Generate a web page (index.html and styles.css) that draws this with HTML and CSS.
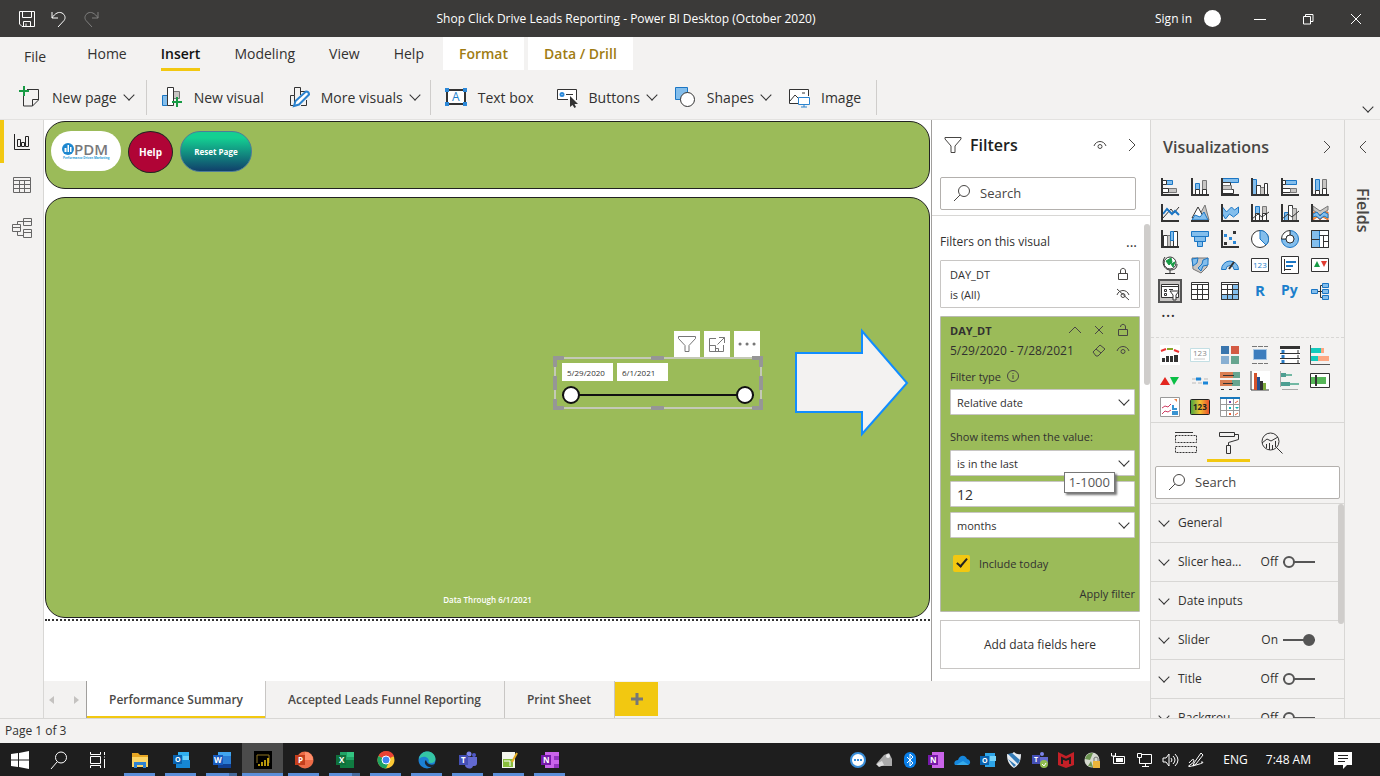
FILE: index.html
```html
<!DOCTYPE html>
<html lang="en">
  <head>
    <meta charset="UTF-8" />
    <meta name="viewport" content="width=device-width, initial-scale=1.0" />
    <title>Shop Click Drive Leads Reporting - Power BI Desktop</title>
    <link rel="stylesheet" href="styles.css">
  </head>
  <body>
    <header class="titlebar">
      <div class="quick">
        <button aria-label="Save"><svg width="18" height="18" viewBox="0 0 18 18"><path d="M1.500 1.500h15v15H4l-2.500-2.500zM4.500 1.500v6h9v-6M5.500 16.500v-5h7v5M8 16.500v-3" /></svg></button>
        <button aria-label="Undo"><svg width="18" height="18" viewBox="0 0 18 18"><path d="M2 2v6h6M2 8c3-5 7-6.500 10-5s4 5 2 7.500L8 17" /></svg></button>
        <button aria-label="Redo" class="dim"><svg width="18" height="18" viewBox="0 0 18 18"><path d="M16 2v6h-6M16 8c-3-5-7-6.500-10-5s-4 5-2 7.500L10 17" /></svg></button>
      </div>
      <h1>Shop Click Drive Leads Reporting - Power BI Desktop (October 2020)</h1>
      <div class="window-controls">
        <a href="#" class="sign-in">Sign in <span class="avatar"></span></a>
        <button aria-label="Minimize"><svg width="12" height="12" viewBox="0 0 12 12"><path d="M0 6.500h12" /></svg></button>
        <button aria-label="Restore"><svg width="12" height="12" viewBox="0 0 12 12"><path d="M1.500 3.500h7V11h-7zM3.500 3.500v-2h7.500v7H8.500" /></svg></button>
        <button aria-label="Close"><svg width="12" height="12" viewBox="0 0 12 12"><path d="M1 1l10 10M11 1L1 11" /></svg></button>
      </div>
    </header>

    <nav class="ribbon-tabs">
      <a href="#" class="file">File</a>
      <a href="#">Home</a>
      <a href="#" class="active"><span>Insert</span></a>
      <a href="#">Modeling</a>
      <a href="#">View</a>
      <a href="#">Help</a>
      <a href="#" class="context">Format</a>
      <a href="#" class="context">Data / Drill</a>
    </nav>

    <div class="ribbon">
      <div class="group">
        <button><svg width="22" height="22" viewBox="0 0 22 22"><path class="k" d="M8 3.500h11.500V14l-6 6H4.500V9M19.500 13.500h-6V20" /><path class="green" d="M5 0v10M0 5h10" /></svg>New page<i class="chev"></i></button>
      </div>
      <div class="group">
        <button><svg width="22" height="22" viewBox="0 0 22 22"><path class="g" d="M12.500 5.500h6v7h-6z" /><path class="b" d="M1.500 9.500h5v10h-5z" /><path class="w" d="M6.500 1.500h6v18h-6z" /><path class="green" d="M16 11v10M11 16h10" /></svg>New visual</button>
        <button><svg width="22" height="22" viewBox="0 0 22 22"><path class="k" d="M6 19.500H2.500v-10h4v10M6.500 9.500v-8h6V9M13 5.500h5M13 19.500h5.500V14" /><path class="pencil" d="M6 20l1.500-5L18 5.500q3 0 3 3L11 18.500z" /></svg>More visuals<i class="chev"></i></button>
      </div>
      <div class="group">
        <button><svg width="22" height="22" viewBox="0 0 22 22"><path class="w" d="M2 4h18v14H2z" stroke-width="2" /><path class="dots" d="M0 2h4v4H0zM18 2h4v4h-4zM0 16h4v4H0zM18 16h4v4h-4z" /><text class="blue" x="7" y="15" font-size="12">A</text></svg>Text box</button>
        <button><svg width="22" height="22" viewBox="0 0 22 22"><path class="w" d="M12 13.500H1.500v-10h19V14" /><circle class="ring" cx="6" cy="8.500" r="1.500" /><path class="k" d="M10 8.500h7" /><path class="solid" d="M14 10v11l2.500-2 2 3 1.500-1-1.500-3H22z" /></svg>Buttons<i class="chev"></i></button>
        <button><svg width="22" height="22" viewBox="0 0 22 22"><path class="b" d="M1.500 1.500h12v12h-12z" /><circle class="w" cx="13.500" cy="13.500" r="7" /></svg>Shapes<i class="chev"></i></button>
        <button><svg width="22" height="22" viewBox="0 0 22 22"><path class="w" d="M10 17.500H1.500v-14h19V10" /><path class="k" d="M2 15l5-6 4 4M14 7h3" /><path class="screen" d="M10.500 11.500h11v7h-11zM16 18v3M13 21h6" /></svg>Image</button>
      </div>
      <i class="chev collapse"></i>
    </div>

    <main class="workspace">
      <nav class="rail">
        <button class="active" aria-label="Report view"><svg width="18" height="18" viewBox="0 0 18 18"><path d="M1.500 1v15.500H17M4.500 6.500h3v7h-3zM8.500 9.500h3v4h-3zM12.500 3.500h3v10h-3z" /></svg></button>
        <button aria-label="Data view"><svg width="18" height="18" viewBox="0 0 18 18"><path d="M.5 1.500h17v15H.5zM.5 4.500h17M.5 8.500h17M.5 12.500h17M6.500 4v12M11.500 4v12" /></svg></button>
        <button aria-label="Model view"><svg width="20" height="20" viewBox="0 0 20 20"><path d="M.5 6.500h8v7h-8zM.5 9.500h8M11.500.5h8v7h-8zM11.500 3.500h8M11.500 11.500h8v8h-8zM11.500 14.500h8M5.500 6V3.500h6M5.500 14v3.500h6" /></svg></button>
      </nav>

      <section class="work">
        <div class="panes">
          <div class="canvas">
            <div class="report">
              <div class="report-header">
                <div class="pdm">
                  <svg width="52" height="20" viewBox="0 0 52 20"><circle cx="8" cy="8" r="6" fill="#1d87cf" /><path d="M4.500 11V7h2v4M7.500 11V4H9v7M10 11V6h1.500v5" fill="#fff" /><text class="brand" x="14" y="14" font-size="15">PDM</text><text class="tagline" x="3" y="18" font-size="3">Performance Driven Marketing</text></svg>
                </div>
                <button class="help">Help</button>
                <button class="reset">Reset Page</button>
              </div>
              <div class="report-body">
                <div class="slicer-tools">
                  <button aria-label="Filters"><svg width="20" height="20" viewBox="0 0 20 20"><path d="M1.500 2.500h17v2L12 11.500v6H8v-6L1.500 4.500z" /></svg></button>
                  <button aria-label="Focus mode"><svg width="20" height="20" viewBox="0 0 20 20"><path d="M9 4.500H2.500v13h14V11M2.500 11.500h6v6M8.500 14.500h3v3M10.500 10.500l7-7M12 3.500h5.500V9" /></svg></button>
                  <button aria-label="More options"><svg width="20" height="20" viewBox="0 0 20 20"><path class="more" d="M3 10h.1M10 10h.1M17 10h.1" /></svg></button>
                </div>
                <div class="slicer">
                  <svg class="handles" width="210" height="54" viewBox="0 0 210 54"><path class="frame" d="M2 2h206v50H2z" /><path class="grip" d="M2 11V2h9M98 2h13M199 2h9v9M208 20v14M208 43v9h-9M111 52H98M11 52H2v-9M2 34V20" /></svg>
                  <div class="dates">
                    <input type="text" value="5/29/2020" aria-label="Start date" />
                    <input type="text" value="6/1/2021" aria-label="End date" />
                  </div>
                  <div class="range">
                    <input type="range" value="0" aria-label="From" />
                    <input type="range" value="100" aria-label="To" />
                  </div>
                </div>
                <svg class="arrow" width="116" height="110" viewBox="0 0 116 110"><path d="M2 25h66V3l45 52-45 51V84H2z" /></svg>
                <p class="through">Data Through 6/1/2021</p>
              </div>
            </div>
          </div>

          <aside class="filters">
            <div class="filters-top">
              <div class="pane-head">
                <svg width="18" height="18" viewBox="0 0 18 18"><path d="M1 1.500h16v1.500L11 10v6.500H7V10L1 3z" /></svg>
                <h2>Filters</h2>
                <button aria-label="Show or hide"><svg width="14" height="14" viewBox="0 0 14 14"><path d="M1 8c2-6 10-6 12 0" /><circle cx="7" cy="8.500" r="2" /></svg></button>
                <button aria-label="Collapse"><svg width="10" height="14" viewBox="0 0 10 14"><path d="M2 1l6 6-6 6" /></svg></button>
              </div>
              <label class="search"><svg width="18" height="18" viewBox="0 0 18 18"><circle cx="11" cy="7" r="5.500" /><path d="M7 11l-6 6" /></svg><input type="text" placeholder="Search" aria-label="Search filters" /></label>
            </div>
            <div class="filters-list">
              <div class="section-title">Filters on this visual <span>...</span></div>
              <div class="card">
                <div class="row">DAY_DT <svg width="14" height="14" viewBox="0 0 14 14"><path d="M2.500 6.500h9v6h-9zM4.500 6V4c0-3.500 5-3.500 5 0v2" /></svg></div>
                <div class="row">is (All) <svg width="14" height="14" viewBox="0 0 14 14"><path d="M1 8c2-6 10-6 12 0M1 2l12 11" /><circle cx="7" cy="8.500" r="2" /></svg></div>
              </div>
              <div class="card open">
                <div class="row"><b>DAY_DT</b>
                  <span class="icons">
                    <svg width="14" height="14" viewBox="0 0 14 14"><path d="M1 10l6-6 6 6" /></svg>
                    <svg width="14" height="14" viewBox="0 0 14 14"><path d="M3 3l8 8M11 3l-8 8" /></svg>
                    <svg width="14" height="14" viewBox="0 0 14 14"><path d="M2.500 6.500h9v6h-9zM4.500 4c0-3.500 5-3.500 5 0v2" /></svg>
                  </span>
                </div>
                <div class="row period">5/29/2020 - 7/28/2021
                  <span class="icons">
                    <svg width="14" height="14" viewBox="0 0 14 14"><path d="M1 9l7-7 5 4-7 7H4zM4 6l5 4" /></svg>
                    <svg width="14" height="14" viewBox="0 0 14 14"><path d="M1 8c2-6 10-6 12 0" /><circle cx="7" cy="8.500" r="2" /></svg>
                  </span>
                </div>
                <label class="field-label" for="filter-type">Filter type <svg width="14" height="14" viewBox="0 0 14 14"><circle cx="7" cy="7" r="5.500" /><path d="M7 6v4M7 4v1" /></svg></label>
                <div class="select"><select id="filter-type"><option>Relative date</option></select></div>
                <label class="field-label second" for="when">Show items when the value:</label>
                <div class="select"><select id="when"><option>is in the last</option></select></div>
                <div class="amount"><input type="text" value="12" aria-label="Amount" /><span class="tooltip">1-1000</span></div>
                <div class="select"><select aria-label="Unit"><option>months</option></select></div>
                <label class="include"><input type="checkbox" checked /> Include today</label>
                <button class="apply">Apply filter</button>
              </div>
              <div class="drop">Add data fields here</div>
              <i class="thumb"></i>
            </div>
          </aside>
        </div>

        <nav class="pages">
          <div class="arrows"><i></i><i class="next"></i></div>
          <a href="#" class="active">Performance Summary</a>
          <a href="#">Accepted Leads Funnel Reporting</a>
          <a href="#">Print Sheet</a>
          <button class="add" aria-label="New page"><svg width="12" height="12" viewBox="0 0 12 12"><path d="M6 0v12M0 6h12" /></svg></button>
        </nav>
      </section>

      <aside class="visuals">
        <div class="pane-head">
          <h2>Visualizations</h2>
          <button aria-label="Collapse"><svg width="10" height="14" viewBox="0 0 10 14"><path d="M2 1l6 6-6 6" /></svg></button>
        </div>
        <div class="gallery">
          <svg viewBox="0 0 18 18"><path class="b" d="M5.500 2.500h6v4h-6z" /><path class="w" d="M1.500 2.500h4v4h-4z" /><path class="g" d="M7.500 10.500h8v4h-8z" /><path class="w" d="M1.500 10.500h6v4h-6z" /><path class="axis" d="M1 0v17h17" /></svg>
          <svg viewBox="0 0 18 18"><path class="b" d="M4.500 5.500h4v6h-4z" /><path class="w" d="M4.500 11.500h4v5h-4z" /><path class="g" d="M11.500 2.500h4v9h-4z" /><path class="w" d="M11.500 11.500h4v5h-4z" /><path class="axis" d="M1 0v17h17" /></svg>
          <svg viewBox="0 0 18 18"><path class="b" d="M1.500.5h16v4h-16z" /><path class="w" d="M1.500 4.500h8v3h-8zM1.500 11.500h11v4h-11z" /><path class="g" d="M1.500 7.500h9v4h-9z" /><path class="axis" d="M1 0v17h17" /></svg>
          <svg viewBox="0 0 18 18"><path class="b" d="M1.500 1.500h4v15h-4z" /><path class="w" d="M5.500 7.500h4v9h-4z" /><path class="g" d="M9.500 9.500h4v7h-4z" /><path class="w" d="M13.500 5.500h3v11h-3z" /><path class="axis" d="M1 0v17h17" /></svg>
          <svg viewBox="0 0 18 18"><path class="b" d="M4.500 2.500h11v4h-11z" /><path class="w" d="M1.500 2.500h3v4h-3zM1.500 10.500h8v4h-8z" /><path class="g" d="M9.500 10.500h6v4h-6z" /><path class="axis" d="M1 0v17h17" /></svg>
          <svg viewBox="0 0 18 18"><path class="b" d="M4.500 1.500h4v11h-4z" /><path class="g" d="M11.500 1.500h4v9h-4z" /><path class="w" d="M4.500 12.500h4v4h-4zM11.500 10.500h4v6h-4z" /><path class="axis" d="M1 0v17h17" /></svg>

          <svg viewBox="0 0 18 18"><path class="k" d="M2 14l8-9 3 4 5-6" /><path class="bl" d="M2 10l4-5 5 5 3-3 4 4" /><path class="axis" d="M1 0v17h17" /></svg>
          <svg viewBox="0 0 18 18"><path class="g" d="M9 10l5-9 4 15z" /><path class="w" d="M1 14l6-11 6 11z" /><path class="b" d="M1 16l3-5 5 2 4-5 4 8z" /><path class="axis" d="M0 17h18" /></svg>
          <svg viewBox="0 0 18 18"><path class="b" d="M1.500 3l4 5 5-5 3 3 4-3v6l-5 4-4-3-4 5-3-5z" /><path class="axis" d="M1 0v17h17" /></svg>
          <svg viewBox="0 0 18 18"><path class="b" d="M4.500 2.500h4v14h-4z" /><path class="g" d="M11.500 2.500h4v14h-4z" /><path class="w" d="M4.500 9.500h4v7h-4zM11.500 9.500h4v7h-4z" /><path class="k" d="M1 15l6-5 4 3 7-5" /><path class="axis" d="M1 0v17h17" /></svg>
          <svg viewBox="0 0 18 18"><path class="b" d="M3.500 8.500h4v8h-4z" /><path class="w" d="M7.500 1.500h4v15h-4z" /><path class="g" d="M11.500 4.500h4v12h-4z" /><path class="k" d="M1 15l6-5 4 3 7-6" /><path class="axis" d="M1 0v17h17" /></svg>
          <svg viewBox="0 0 18 18"><path d="M2 8h15v8l-5-3-3 3-3-3-4 3z" fill="#f3a33b" stroke="#e8682c" /><path class="g" d="M2 2l7 5 8-5v4l-8 5-7-5z" /><path class="b" d="M2 10l4-2 3 4 4-4 4 2v4l-4-2-4 3-4-3-3 1z" /><path class="axis" d="M1 0v17h17" /></svg>

          <svg viewBox="0 0 18 18"><path class="w" d="M2.500 5.500h4v11h-4zM12.500 1.500h4v15h-4z" /><path class="g" d="M6.500 5.500h3v11h-3z" /><path class="b" d="M9.500 1.500h3v9h-3z" /><path class="axis" d="M1 0v17h17" /></svg>
          <svg viewBox="0 0 18 18"><path class="b" d="M.5 1.500h17v5H.5zM3.500 6.500h11v5h-11zM6.500 11.500h5v5h-5z" /></svg>
          <svg viewBox="0 0 18 18"><path class="dots" d="M3 4h3v3H3zM8 7h3v3H8zM12 11h3v3h-3z" /><path class="solid" d="M12 1h3v3h-3zM3 12h3v3H3z" /><path class="axis" d="M1 0v17h17" /></svg>
          <svg viewBox="0 0 18 18"><circle class="w" cx="9" cy="9" r="8.500" /><path class="b" d="M9 9V.5a8.500 8.500 0 0 1 6 14.500z" /></svg>
          <svg viewBox="0 0 18 18"><path class="b" d="M9 .5A8.500 8.500 0 1 1 .5 9H5a4 4 0 1 0 4-4z" /><path class="w" d="M.5 9A8.500 8.500 0 0 1 9 .5V5a4 4 0 0 0-4 4z" /><circle class="w" cx="9" cy="9" r="4" /></svg>
          <svg viewBox="0 0 18 18"><path class="w" d="M.5.5h17v17H.5z" /><path class="b" d="M.5.5h8v17h-8z" /><path class="k" d="M.5 9.500h8M8.500 5.500h9M12.500 5.500v12M12.500 11.500h5M.5.5h17v17H.5z" /></svg>

          <svg viewBox="0 0 18 18"><circle class="w" cx="9" cy="7" r="6" /><path d="M5 5l5-3 1 4-3 3zM10 8l4-2-2 5z" fill="#169b45" stroke="#169b45" /><path class="k" d="M4 1C0 6 3 14 9 14s7-3 7-6M9 14v3M4 17.500h10" /></svg>
          <svg viewBox="0 0 18 18"><path class="g" d="M1 2h16l-1 9-6 6-8-4z" /><path class="b" d="M1 3l6-1-1 5-4 3zM12 4l5-2v7l-5 1-2 5-3-3 4-4z" /></svg>
          <svg viewBox="0 0 18 18"><path class="b" d="M.5 13.500a8.500 8.500 0 0 1 17 0H13a4 4 0 0 0-8 0z" /><path class="axis" d="M8 13l5-7" /></svg>
          <svg viewBox="0 0 18 18"><path class="w" d="M.5 2.500h17v13H.5z" /><text class="blue" x="2" y="12" font-size="8">123</text></svg>
          <svg viewBox="0 0 18 18"><path class="w" d="M.5.5h17v17H.5z" /><path class="k" d="M3.500 3v12M4 13.500h6" /><path class="thick" d="M5 6h10M5 10h7" /></svg>
          <svg viewBox="0 0 18 18"><path class="w" d="M.5 2.500h17v13H.5z" /><path d="M3 11l3-6 3 6z" fill="#169b45" stroke="none" /><path d="M10 5h6l-3 6z" fill="#e03a2f" stroke="none" /></svg>

          <svg class="selected" viewBox="0 0 18 18"><path class="w" d="M.5 2.500h17v13H.5z" /><path class="k" d="M.5 4.500h17M3.500 7.500h2v2h-2zM3.500 11.500h2v2h-2zM8 7.500h4" /><path class="w" d="M9 9h9l-3 4v5h-3v-5z" /></svg>
          <svg viewBox="0 0 18 18"><path class="w" d="M.5.5h17v17H.5z" /><path class="k" d="M.5 2.500h17M.5 7.500h17M.5 12.500h17M6.500 2v15M11.500 2v15" /></svg>
          <svg viewBox="0 0 18 18"><path class="w" d="M.5.5h17v17H.5z" /><path class="b" d="M11.500 2.500h6v15H.5v-5h11z" /><path class="k" d="M.5 2.500h17M.5 7.500h17M.5 12.500h17M6.500 2v15M11.500 2v15M.5.5h17v17H.5z" /></svg>
          <svg viewBox="0 0 18 18"><text class="blue bold" x="4" y="14" font-size="15">R</text></svg>
          <svg viewBox="0 0 18 18"><text class="blue bold" x="0" y="13" font-size="14">Py</text></svg>
          <svg viewBox="0 0 18 18"><path class="k" d="M6 9.500h6M9.500 9V3.500H12M9.500 9v6.500H12" /><path class="b" d="M.5 7.500h6v4h-6zM11.500 1.500h6v4h-6zM11.500 7.500h6v4h-6zM11.500 13.500h6v4h-6z" /></svg>
        </div>
        <div class="more-visuals">...</div>
        <div class="gallery custom">
          <svg viewBox="0 0 20 20"><path d="M0 0h20v20H0z" fill="#fff" /><path d="M1 6l5-2" stroke="#e33" stroke-width="2" /><path d="M7 4h6" stroke="#8aa62a" stroke-width="2" /><path d="M14 5l5 2" stroke="#e33" stroke-width="2" /><path class="solid" d="M2 13h3v4H2zM6 11h3v6H6zM10 11h3v6h-3zM14 10h4v7h-4z" /></svg>
          <svg viewBox="0 0 20 20"><path d="M.5 3.500h19v13H.5z" fill="#fff" stroke="#c3dfe4" /><text class="muted" x="3" y="11" font-size="8">123</text><path d="M4 14h11" stroke="#ccc" /></svg>
          <svg viewBox="0 0 20 20"><path d="M1 1h8v8H1z" fill="#3a76ae" /><path d="M11 1h8v8h-8z" fill="#d45a43" /><path d="M1 11h8v8H1z" fill="#88afd2" /><path d="M11 11h8v8h-8z" fill="#67a58f" /></svg>
          <svg viewBox="0 0 20 20"><path d="M2 1.500h16M2 18.500h16" stroke="#777" stroke-dasharray="5 1" /><path d="M3 4h14v11H3z" fill="#a9c8e4" /><path d="M4 5h12v9H4z" fill="#3d7dbd" /></svg>
          <svg viewBox="0 0 20 20"><path d="M0 1h20v18H0z" fill="#fff" /><path class="solid" d="M0 1h20v3H0z" /><path class="k" d="M0 8.500h20M0 13.500h20M0 18.500h20" /><path d="M3 5v14" stroke="#2b7cc4" stroke-width="3" stroke-dasharray="3 2" /><path d="M18 5v14" stroke="#999" stroke-width="2" stroke-dasharray="3 2" /></svg>
          <svg viewBox="0 0 20 20"><path d="M.5 0v19.500H20" fill="none" stroke="#555" /><path d="M1 3h10v5H1zM1 11h7v5H1z" fill="#15cabd" /><path d="M11 3h3v5h-3zM8 11h11v5H8z" fill="#fda782" /></svg>

          <svg viewBox="0 0 20 20"><path d="M0 14l5-8 5 8z" fill="#e3261f" /><path d="M10 6h9l-5 8z" fill="#0abf45" /></svg>
          <svg viewBox="0 0 20 20"><path d="M2 8h16M2 12h16" stroke="#bbb" stroke-dasharray="4 2" /><path d="M6 8h5M13 12h5" stroke="#1b86d8" stroke-width="3" /></svg>
          <svg viewBox="0 0 20 20"><path d="M0 1h20v6H0zM0 9h20v6H0z" fill="#d97e52" /><path d="M13 1h7v6h-7zM12 9h8v6h-8z" fill="#67a58f" /><path class="k" d="M3 4.500h11M3 12.500h10M1 18.500h3M9 18.500h3M17 18.500h3" /></svg>
          <svg viewBox="0 0 20 20"><path d="M0 0h20v20H0z" fill="#fff" /><path class="k" d="M1 0v19h18" /><path d="M4 2h3v17H4z" fill="#d4532d" /><path d="M7 6h3v13H7z" fill="#24508f" /><path d="M10 10h3v9h-3z" fill="#333" /><path d="M13 12h3v7h-3z" fill="#7caa3c" /></svg>
          <svg viewBox="0 0 20 20"><path d="M.5 0v16M2 18.500h16" stroke="#aaa" /><path d="M1 4h11M1 13h18" stroke="#72b8a3" stroke-width="2" /><path d="M1 4h5M1 13h9" stroke="#4d9e92" stroke-width="4" /></svg>
          <svg viewBox="0 0 20 20"><path class="w" d="M.5 2.500h19v14H.5z" /><path d="M1 6h15v7H1z" fill="#56b658" /><path class="solid" d="M5 4h2v11H5z" /></svg>

          <svg viewBox="0 0 20 20"><path d="M.5.5h19v19H.5z" fill="#fff" stroke="#999" /><path d="M2 11l3-2 3 1 3-3M2 17l3-3 3 1 3-2" fill="none" stroke="#cf3b62" /><path d="M12 8h2v3h3v2h-5zM12 14h6v4h-6z" fill="#3994d2" /><path d="M14 2h3v3z" fill="#ef8044" /></svg>
          <svg viewBox="0 0 20 20"><defs><linearGradient id="heat"><stop stop-color="#43a641" /><stop offset=".5" stop-color="#f2c230" /><stop offset="1" stop-color="#ea4b2c" /></linearGradient></defs><rect x=".5" y="2.500" width="19" height="15" rx="1" fill="url(#heat)" stroke="#222" /><text class="ink" x="3" y="13" font-size="8">123</text></svg>
          <svg viewBox="0 0 20 20"><path d="M0 0h20v20H0z" fill="#fff" /><path d="M0 1h20" stroke="#1777bd" stroke-width="2" /><path d="M.5 2v17.500h19V2M6.500 2v17M13.500 2v17M0 7.500h20M0 13.500h20" fill="none" stroke="#999" /><path d="M9 4h2v2H9z" fill="#7143ac" /><path d="M9 10h2v2H9zM15 10l2 2 2-2" fill="#11b6b6" /><path d="M9 16h2v2H9z" fill="#e9613b" /><path d="M15 6l3-2M15 18l3-2" stroke="#e9613b" /></svg>
        </div>
        <div class="format-tabs">
          <button aria-label="Fields"><svg width="22" height="22" viewBox="0 0 22 22"><path d="M0 .5h18" /><path stroke-dasharray="2 1" d="M.5 3.500h21v7H.5zM.5 14.500h21v6H.5z" /></svg></button>
          <button class="active" aria-label="Format"><svg width="22" height="22" viewBox="0 0 22 22"><path d="M1.500.5h15v4h-15zM16.500 2.500h4v5l-10 3v3M8.500 13.500h4v8h-4z" /></svg></button>
          <button aria-label="Analytics"><svg width="22" height="22" viewBox="0 0 22 22"><circle cx="9.500" cy="9.500" r="8.500" /><path d="M15 15l6.500 6.500M1 11l5-4 4 2 7-4M5.500 16v-4M8.500 18v-7M11.500 18v-5M14.500 15v-6" /></svg></button>
        </div>
        <label class="search"><svg width="18" height="18" viewBox="0 0 18 18"><circle cx="11" cy="7" r="5.500" /><path d="M7 11l-6 6" /></svg><input type="text" placeholder="Search" aria-label="Search format options" /></label>
        <div class="options">
          <div class="option"><i class="chev"></i><span>General</span></div>
          <div class="option"><i class="chev"></i><span>Slicer hea...</span><label>Off <input type="checkbox" /></label></div>
          <div class="option"><i class="chev"></i><span>Date inputs</span></div>
          <div class="option"><i class="chev"></i><span>Slider</span><label>On <input type="checkbox" checked /></label></div>
          <div class="option"><i class="chev"></i><span>Title</span><label>Off <input type="checkbox" /></label></div>
          <div class="option"><i class="chev"></i><span>Backgrou...</span><label>Off <input type="checkbox" /></label></div>
          <i class="thumb"></i>
        </div>
      </aside>

      <aside class="fields">
        <button aria-label="Expand"><svg width="10" height="14" viewBox="0 0 10 14"><path d="M8 1L2 7l6 6" /></svg></button>
        <h2>Fields</h2>
      </aside>
    </main>

    <div class="status">Page 1 of 3</div>

    <footer class="taskbar">
      <div class="apps">
        <button class="sys" aria-label="Start"><svg viewBox="0 0 18 18"><path d="M0 3l7-1v6.500H0zM8 2l10-2v8.500H8zM0 9.500h7V16l-7-1zM8 9.500h10V18L8 16z" fill="#fff" /></svg></button>
        <button class="sys" aria-label="Search"><svg viewBox="0 0 18 18"><circle class="wl" cx="11" cy="6.500" r="5.500" /><path class="wl" d="M7 11l-6 7" /></svg></button>
        <button class="sys" aria-label="Task view"><svg viewBox="0 0 18 18"><path class="wl" d="M1.500 1v2.500h10V1M1.500 5.500h10v7h-10zM1.500 17v-2.500h10V17M15.500 1v3M15.500 8v9M15 6h1" /></svg></button>
        <button aria-label="File Explorer"><svg viewBox="0 0 18 18"><path d="M1 2h6l2 2h8v12H1z" fill="#e8a723" /><path d="M1 6h16v10H1z" fill="#fcd667" /><path d="M3 17v-6h12v6h-3v-3H6v3z" fill="#2f82d1" /></svg></button>
        <button aria-label="Outlook"><svg viewBox="0 0 18 18"><path d="M6 1h11v12H6z" fill="#31b0f0" /><path d="M4 9h14v8H4z" fill="#1686d4" /><path d="M11 5h6v4h-6z" fill="#69d0fa" /><path d="M1 4h9v9H1z" fill="#0a62ae" /><text x="3" y="11" font-size="7">O</text></svg></button>
        <button class="stack" aria-label="Word"><svg viewBox="0 0 18 18"><path d="M5 1h13v16H5z" fill="#2b7cd3" /><path d="M5 1h13v4H5z" fill="#41a5ee" /><path d="M5 13h13v4H5z" fill="#103f91" /><path d="M0 4h10v10H0z" fill="#185abd" /><text x="1" y="12" font-size="8">W</text></svg></button>
        <button class="current" aria-label="Power BI Desktop"><svg viewBox="0 0 18 18"><path d="M0 0h18v18H0z" fill="#000" /><path d="M3 12V4h12v8" fill="none" stroke="#8d7320" /><path d="M5 15v-2M8 15v-4M11 15V9M14 15V7" stroke="#f2c811" stroke-width="1.500" /></svg></button>
        <button aria-label="PowerPoint"><svg viewBox="0 0 18 18"><circle cx="10" cy="9" r="8.500" fill="#ed6c47" /><path d="M10 1a8 8 0 0 1 8 8h-8z" fill="#ff8f6b" /><path d="M0 4h10v10H0z" fill="#c43e1c" /><text x="3" y="12" font-size="8">P</text></svg></button>
        <button class="stack" aria-label="Excel"><svg viewBox="0 0 18 18"><path d="M4 1h14v16H4z" fill="#21a366" /><path d="M11 1h7v5h-7z" fill="#33c481" /><path d="M4 9h14v8H4z" fill="#107c41" /><path d="M0 4h10v10H0z" fill="#0f703b" /><text x="3" y="12" font-size="8">X</text></svg></button>
        <button aria-label="Chrome"><svg viewBox="0 0 18 18"><circle cx="9" cy="9" r="8.500" fill="#fcc934" /><path d="M9 9L1.500 5A8.500 8.500 0 0 1 17 5z" fill="#ea4335" /><path d="M9 9L1.500 5A8.500 8.500 0 0 0 9 17.500l3-7z" fill="#1ea362" /><circle cx="9" cy="9" r="4" fill="#4285f4" stroke="#fff" /></svg></button>
        <button aria-label="Edge"><svg viewBox="0 0 18 18"><circle cx="9" cy="9" r="8.500" fill="#1c80d4" /><path d="M1 8C2-2 17-2 17.500 8c0 4-5 5-7 3 2-4-5-8-9.500-3z" fill="#35c5a4" /><path d="M8 9c-3 2 0 8 6 7 2-1 3-2 3-3-4 2-8 0-9-4z" fill="#1b2635" /></svg></button>
        <button aria-label="Teams"><svg viewBox="0 0 18 18"><circle cx="10" cy="3" r="2.500" fill="#7b83eb" /><circle cx="15" cy="4" r="2" fill="#5059c9" /><path d="M6 6h12v6c0 3-2 3-4 3-1 4-8 3-8-1z" fill="#6269d0" /><path d="M0 4h9v10H0z" fill="#444fb5" /><text x="2" y="12" font-size="8">T</text></svg></button>
        <button aria-label="Notepad++"><svg viewBox="0 0 18 18"><path d="M2 1h13v16H2z" fill="#f4f6ed" /><path d="M3 8h10v8H3z" fill="#88bd3b" /><path d="M4 10h6v5" stroke="#fff" fill="none" /><path d="M17 2l-5 9" stroke="#e5ae25" stroke-width="2" /></svg></button>
        <button aria-label="OneNote"><svg viewBox="0 0 18 18"><path d="M4 1h14v16H4z" fill="#ca64ea" /><path d="M13 5h5v4h-5zM13 13h5v4h-5z" fill="#9332bf" /><path d="M0 4h10v10H0z" fill="#7719aa" /><text x="2" y="12" font-size="8">N</text></svg></button>
      </div>
      <div class="tray">
        <svg viewBox="0 0 16 16"><circle cx="8" cy="8" r="7" fill="#fff" stroke="#388dd8" stroke-width="2" /><path d="M4 8h8" stroke="#388dd8" stroke-dasharray="2 1" stroke-width="2" /></svg>
        <svg viewBox="0 0 16 16"><path d="M1 11l7-8 5-2 3 6v7H5z" fill="#aaa" /><circle cx="12" cy="4" r="2" fill="#eee" /><path d="M0 12l6-3 2 4-5 2z" fill="#ddd" /></svg>
        <svg viewBox="0 0 16 16"><rect x="2" width="12" height="16" rx="6" fill="#087ee8" /><path d="M5 5l6 6-3 3V2l3 3-6 6" fill="none" stroke="#fff" /></svg>
        <svg viewBox="0 0 16 16"><path d="M4 0h12v16H4z" fill="#ca64ea" /><path d="M0 3h10v10H0z" fill="#7719aa" /><text x="2" y="11" font-size="8">N</text></svg>
        <svg viewBox="0 0 16 16"><path d="M1 13c-2-3 1-5 3-5 2-6 8-5 9-1 4 1 4 5 1 6z" fill="#1687dc" /><path d="M2 13l7-4 6 4z" fill="#36abeb" /></svg>
        <svg viewBox="0 0 16 16"><path d="M5 1h10v14H5z" fill="#2da5e8" /><path d="M10 4h6v5h-6z" fill="#76d3fa" /><path d="M0 4h9v9H0z" fill="#0a62ae" /><text x="2" y="11" font-size="7">O</text></svg>
        <svg viewBox="0 0 16 16"><path d="M1 2q4 1 7-2 3 3 7 2c0 7-2 11-7 14C3 13 1 9 1 2z" fill="#e8edf2" /><path d="M2 2l10 10 2-4-8-7zM2 7l6 8 2-2z" fill="#337bb7" /></svg>
        <svg viewBox="0 0 16 16"><circle cx="10" cy="2" r="2" fill="#7b83eb" /><path d="M6 5h10v7H6z" fill="#6269d0" /><path d="M0 3h8v9H0z" fill="#444fb5" /><text x="2" y="10" font-size="7">T</text><circle cx="12" cy="12" r="4" fill="#91bd50" /><path d="M10 12l2 2 2-3" fill="none" stroke="#fff" /></svg>
        <svg viewBox="0 0 16 16"><path d="M0 0l8 4 8-4v13l-8 3-8-3z" fill="#c42027" /><path d="M4 12V6l4 2 4-2v6" fill="none" stroke="#1e1e1e" stroke-width="2" /></svg>
        <svg viewBox="0 0 16 16"><circle cx="8" cy="8" r="7.500" fill="#d5d9cf" /><path d="M1 7c2-6 6-6 8-6l-3 7zM4 14l3-5 2 6z" fill="#6c9551" /><path d="M9 9h7v7H9z" fill="#eab53b" /><path d="M10 9V6q2-2 4 0v3" fill="none" stroke="#777" /></svg>
        <svg viewBox="0 0 16 16"><path class="wl" d="M4 4.500h10.500v7h-11V8M1.500 1v3h4V1M3.500 4v4" /><path d="M6 6h7v4H6z" fill="#fff" /></svg>
        <svg viewBox="0 0 16 16"><path class="wl" d="M6 2.500h9.500v9h-12V6M1.500 1.500h4v4h-4zM9.500 12v3M6 14.500h7" /></svg>
        <svg viewBox="0 0 16 16"><path class="wl" d="M1 6h3l3-4v12l-3-4H1zM9 6q2 2 0 4M11 4q4 4 0 8M13 2q6 6 0 12" /></svg>
        <svg viewBox="0 0 16 16"><path class="wl" d="M6 11L13 1l2 2-7 9-3 2zM1 11q4-5 5-3t-4 5 6 0 5-3" /></svg>
        <span class="lang">ENG</span>
        <span class="clock">7:48 AM</span>
        <button aria-label="Notifications"><svg viewBox="0 0 18 18"><path d="M0 1h18v13h-5l-4 4v-4H0z" fill="#fff" /><path d="M4 4.500h10M4 7.500h10M4 10.500h7" stroke="#222" /></svg></button>
      </div>
    </footer>
  </body>
</html>
```

FILE: styles.css
```css
:root {
  --main-font: "Open Sans", "Noto Sans", sans-serif;
  --panel: #f3f2f1;
  --line: #d8d7d5;
  --text: #323130;
  --yellow: #f2c811;
  --green: #9bbb59;
}

*,
*:before,
*:after {
  box-sizing: border-box;
}

body {
  margin: 0;
  height: 100vh;
  display: flex;
  flex-direction: column;
  overflow: hidden;
  background: var(--panel);
  color: var(--text);
  font-family: var(--main-font);
  font-size: 12px;
}

button,
input,
select {
  font: inherit;
  color: inherit;
}

button {
  padding: 0;
  border: 0;
  background: none;
  display: flex;
  align-items: center;
  justify-content: center;
}

a {
  color: inherit;
  text-decoration: none;
}

h1,
h2,
p {
  margin: 0;
}

svg {
  flex: none;
  fill: none;
  stroke: #484644;
  overflow: visible;
}

svg text {
  stroke: none;
  fill: #fff;
  font-weight: 700;
}

/* icon strokes and fills */
.k {
  fill: none;
  stroke: #333;
}
.axis {
  fill: none;
  stroke: #333;
  stroke-width: 2;
}
.w {
  fill: #fff;
  stroke: #333;
}
.b {
  fill: #83beec;
  stroke: #1b76c4;
}
.g {
  fill: #c8c6c4;
  stroke: #777;
}
.bl {
  stroke: #1b76c4;
  stroke-width: 2;
}
.green {
  stroke: #189b45;
  stroke-width: 2;
}
.pencil,
.screen {
  fill: #fff;
  stroke: #2b83cf;
}
.pencil {
  stroke-width: 2;
}
.dots {
  fill: #2b88d8;
  stroke: none;
}
.ring {
  stroke: #2b88d8;
  stroke-width: 2;
}
.solid {
  fill: #333;
  stroke: none;
}
.thick {
  stroke: #1b76c4;
  stroke-width: 2;
}
svg .blue {
  fill: #1b7fcc;
  font-weight: 400;
}
svg .bold {
  font-weight: 700;
}
svg .muted {
  fill: #888;
  font-weight: 400;
}
svg .ink {
  fill: #222;
}
svg .brand {
  fill: #77787b;
  font-weight: 600;
}
svg .tagline {
  fill: #2b9bd6;
}
.wl {
  fill: none;
  stroke: #fff;
}

.chev {
  flex: none;
  width: 8px;
  height: 8px;
  margin: 0 2px 5px;
  border: solid #333;
  border-width: 0 1px 1px 0;
  transform: rotate(45deg);
}

/* title bar */
.titlebar {
  height: 37px;
  flex: none;
  display: grid;
  grid-template-columns: 1fr auto 1fr;
  align-items: center;
  background: #3b3a39;
  color: #fff;
}
.titlebar h1 {
  font-size: 12px;
  font-weight: 400;
  margin-right: 128px;
}
.titlebar svg {
  stroke: #fff;
}
.quick {
  display: flex;
  gap: 14px;
  padding-left: 18px;
}
.quick .dim {
  opacity: 0.35;
}
.window-controls {
  display: flex;
  justify-content: flex-end;
  align-items: center;
  gap: 36px;
  padding-right: 18px;
}
.sign-in {
  display: flex;
  align-items: center;
  gap: 12px;
  margin-right: -3px;
}
.avatar {
  width: 17px;
  height: 17px;
  border-radius: 50%;
  background: #fff;
}

/* ribbon */
.ribbon-tabs {
  flex: none;
  height: 33px;
  display: flex;
  padding-left: 7px;
  font-size: 14px;
}
.ribbon-tabs a {
  display: flex;
  align-items: center;
  padding: 0 17px;
}
.ribbon-tabs .file {
  padding-top: 5px;
  margin-right: 7px;
}
.ribbon-tabs .active {
  font-weight: 600;
  color: #111;
}
.ribbon-tabs .active span {
  line-height: 28px;
  border-bottom: 3px solid var(--yellow);
  margin-top: 3px;
}
.ribbon-tabs .context {
  margin-right: 4px;
  padding: 0 16px;
  background: #fff;
  color: #a07c12;
  font-weight: 600;
}
.ribbon-tabs a:not(.context) + .context {
  margin-left: 2px;
}
.ribbon {
  flex: none;
  height: 50px;
  display: flex;
  align-items: center;
  padding: 5px 8px 0 0;
  border-bottom: 1px solid #e3e2e0;
  font-size: 14px;
}
.group {
  height: 35px;
  display: flex;
  gap: 24px;
  padding: 0 15px 0 14px;
  border-right: 1px solid #cfcdcb;
}
.group:first-child {
  padding: 0 17px 0 19px;
}
.group:nth-child(3) {
  gap: 22px;
}
.group button {
  gap: 11px;
}
.group .chev {
  margin: 0 -4px 5px -3px;
}
.collapse {
  margin: 20px 0 0 auto;
}

/* workspace */
.workspace {
  flex: 1;
  min-height: 0;
  display: flex;
}
.rail {
  width: 44px;
  flex: none;
  border-right: 1px solid var(--line);
}
.rail button {
  width: 100%;
  height: 43px;
}
.rail svg {
  stroke: #666;
}
.rail .active {
  border-left: 4px solid var(--yellow);
}
.rail .active svg {
  stroke: #222;
  margin-right: 4px;
}
.work {
  flex: 1;
  min-width: 0;
  display: flex;
  flex-direction: column;
}
.panes {
  flex: 1;
  min-height: 0;
  display: flex;
  background: #fff;
}
.canvas {
  flex: 1;
  min-width: 0;
  padding: 1px 1px 60px 1px;
}
.report {
  height: 100%;
  display: flex;
  flex-direction: column;
  gap: 8px;
  padding-bottom: 1px;
  border-bottom: 2px dotted #333;
}
.report-header,
.report-body {
  background: var(--green);
  border: 1px solid #222;
  border-radius: 20px;
}
.report-header {
  height: 68px;
  flex: none;
  display: flex;
  align-items: flex-start;
  gap: 7px;
  padding: 9px 5px;
  color: #fff;
  font-weight: 700;
}
.pdm {
  width: 70px;
  height: 40px;
  display: flex;
  align-items: center;
  justify-content: center;
  border-radius: 20px;
  background: #fff;
}
.pdm svg {
  stroke: none;
}
.help {
  width: 45px;
  height: 42px;
  border: 1px solid #222;
  border-radius: 50%;
  background: #b00436;
  font-size: 10px;
}
.reset {
  width: 72px;
  height: 41px;
  border: 1px solid #4d7c98;
  border-radius: 20px;
  background: linear-gradient(#14cf92 15%, #10406b);
  font-size: 8px;
}
.report-body {
  flex: 1;
  position: relative;
  display: flex;
  align-items: flex-end;
  justify-content: center;
}
.through {
  padding-bottom: 12px;
  color: #fff;
  font-size: 8px;
  font-weight: 600;
}
.slicer-tools {
  position: absolute;
  left: 628px;
  top: 133px;
  display: flex;
  gap: 4px;
}
.slicer-tools button {
  width: 26px;
  height: 26px;
  background: #fff;
}
.slicer-tools svg {
  stroke: #777;
}
svg .more {
  stroke-width: 3;
  stroke-linecap: round;
}
.slicer {
  position: absolute;
  left: 507px;
  top: 158px;
  width: 210px;
  height: 54px;
  padding: 7px 9px;
}
.handles {
  position: absolute;
  left: 0;
  top: 0;
}
.frame {
  stroke: #c4c9b6;
  stroke-width: 2;
}
.grip {
  stroke: #969696;
  stroke-width: 4;
}
.dates {
  position: relative;
  display: flex;
  gap: 4px;
}
.dates input {
  width: 51px;
  height: 18px;
  padding: 0 5px;
  border: 0;
  background: #fff;
  font-size: 8px;
}
.range {
  position: relative;
  height: 18px;
  margin-top: 5px;
  background: linear-gradient(#111, #111) center / 100% 2px no-repeat;
}
.range input {
  position: absolute;
  inset: 0;
  width: 100%;
  height: 18px;
  margin: 0;
  appearance: none;
  background: none;
  pointer-events: none;
}
.range input::-webkit-slider-thumb {
  appearance: none;
  width: 18px;
  height: 18px;
  border: 2px solid #111;
  border-radius: 50%;
  background: #fff;
  pointer-events: auto;
}
.arrow {
  position: absolute;
  left: 748px;
  top: 130px;
  fill: var(--panel);
  stroke: #118dff;
  stroke-width: 2;
}

/* side panes */
.pane-head {
  display: flex;
  align-items: center;
}
.pane-head h2 {
  font-weight: 600;
}
.search {
  display: flex;
  align-items: center;
  gap: 9px;
  height: 33px;
  padding: 0 12px 2px;
  border: 1px solid #b3b0ad;
  border-radius: 2px;
  background: #fff;
}
.search input {
  min-width: 0;
  flex: 1;
  padding: 0;
  border: 0;
  outline: 0;
  background: none;
  font-size: 13px;
}
.search input::placeholder {
  color: #484644;
}
.thumb {
  position: absolute;
  right: 0;
  width: 6px;
  border-radius: 3px;
  background: #cfcdcb;
}

.filters {
  width: 219px;
  flex: none;
  border-left: 1px solid #a19f9d;
  display: flex;
  flex-direction: column;
}
.filters-top {
  padding: 0 14px 5px 8px;
  border-bottom: 1px solid var(--line);
}
.filters .pane-head {
  height: 49px;
  margin-bottom: 8px;
  padding-left: 4px;
}
.filters h2 {
  margin: 0 auto 0 8px;
  font-size: 16px;
  color: #201f1e;
}
.filters .pane-head button + button {
  margin: 0 -1px 0 20px;
}
.filters-list {
  position: relative;
  flex: 1;
  padding: 0 10px 0 8px;
}
.filters-list .thumb {
  top: 8px;
  height: 161px;
}
.section-title {
  display: flex;
  justify-content: space-between;
  padding: 16px 3px 8px 0;
  line-height: 20px;
}
.section-title span {
  font-size: 14px;
}
.card {
  margin-bottom: 8px;
  padding: 3px 9px;
  border: 1px solid #c8c6c4;
  border-radius: 1px;
  background: #fff;
  font-size: 11px;
}
.row {
  display: flex;
  align-items: center;
  justify-content: space-between;
  height: 20px;
}
.icons {
  display: flex;
  gap: 10px;
}
.open {
  height: 296px;
  padding: 3px 4px 0 9px;
  border-color: #b9bbb0;
  background: var(--green);
}
.open .row {
  padding-right: 5px;
}
.period {
  font-size: 12px;
}
.field-label {
  display: flex;
  align-items: center;
  gap: 5px;
  height: 18px;
  margin: 7px 0 4px;
}
.second {
  margin: 12px 0 5px;
}
.select {
  position: relative;
  margin-bottom: 5px;
}
.select:after {
  content: "";
  position: absolute;
  right: 7px;
  top: 7px;
  width: 8px;
  height: 8px;
  border: solid #333;
  border-width: 0 1px 1px 0;
  transform: rotate(45deg);
}
.select select,
.amount input {
  display: block;
  width: 100%;
  height: 26px;
  padding: 0 6px;
  border: 1px solid #c8c6c4;
  border-radius: 1px;
  background: #fff;
  appearance: none;
}
.amount {
  position: relative;
  margin-bottom: 5px;
}
.amount input {
  font-size: 14px;
}
.tooltip {
  position: absolute;
  right: 20px;
  top: -9px;
  height: 21px;
  padding: 0 4px;
  border: 1px solid #777;
  background: #fff;
  box-shadow: 2px 2px 2px #777;
  font-size: 13px;
  line-height: 19px;
  color: #575757;
}
.include {
  display: flex;
  align-items: center;
  gap: 9px;
  margin: 17px 0 0 3px;
}
.include input {
  width: 17px;
  height: 17px;
  margin: 0;
  appearance: none;
  border-radius: 2px;
  background: var(--yellow);
}
.include input:checked:before {
  content: "";
  display: block;
  width: 6px;
  height: 11px;
  margin: 1px 0 0 6px;
  border: solid #222;
  border-width: 0 2px 2px 0;
  transform: rotate(40deg);
}
.apply {
  margin: 14px 0 0 auto;
}
.drop {
  height: 49px;
  display: flex;
  align-items: center;
  justify-content: center;
  border: 1px solid #c8c6c4;
  font-size: 12px;
}

/* page tabs */
.pages {
  height: 37px;
  flex: none;
  display: flex;
  background: var(--panel);
}
.pages a {
  display: flex;
  align-items: center;
  padding: 0 23px 0 22px;
  border-right: 1px solid #c8c6c4;
  font-weight: 600;
  color: #4b4947;
}
.pages .active {
  padding-right: 22px;
  background: #fff;
  box-shadow: inset 0 -2px var(--yellow);
}
.arrows {
  width: 43px;
  display: flex;
  align-items: center;
  justify-content: space-between;
  padding: 0 7px 0 5px;
  border-right: 1px solid #a19f9d;
}
.arrows i {
  border: solid transparent;
  border-width: 4px 5px 4px 0;
  border-right-color: #c4c2c0;
}
.arrows .next {
  transform: rotate(180deg);
}
.add {
  width: 43px;
  height: 34px;
  margin-top: 1px;
  background: var(--yellow);
}
.add svg {
  stroke: #777;
  stroke-width: 3;
}

/* visualizations */
.visuals {
  width: 195px;
  flex: none;
  display: flex;
  flex-direction: column;
  border: solid var(--line);
  border-width: 0 1px;
}
.visuals .pane-head {
  height: 54px;
  justify-content: space-between;
  padding: 0 12px;
}
.visuals h2,
.fields h2 {
  font-size: 16px;
  color: #484644;
}
.gallery {
  display: grid;
  grid-template-columns: repeat(6, 30px);
  grid-auto-rows: 26px;
  place-items: center;
  margin-left: 4px;
}
.gallery svg {
  width: 18px;
  height: 18px;
}
.gallery .selected {
  width: 24px;
  height: 24px;
  padding: 1px;
  border: 2px solid #555;
  background: #c8c6c4;
}
.more-visuals {
  height: 34px;
  padding-left: 10px;
  border-bottom: 1px dashed var(--line);
  font-size: 18px;
  line-height: 12px;
}
.custom {
  margin-top: 4px;
  padding-bottom: 2px;
}
.custom svg {
  width: 20px;
  height: 20px;
  stroke: none;
}
.format-tabs {
  display: flex;
  padding-left: 13px;
  border-top: 1px solid var(--line);
}
.format-tabs button {
  width: 43px;
  height: 39px;
  padding-top: 3px;
  border-bottom: 3px solid transparent;
}
.format-tabs svg {
  stroke: #333;
}
.format-tabs .active {
  border-color: var(--yellow);
}
.visuals .search {
  margin: 4px;
  flex: none;
}
.options {
  position: relative;
  flex: 1;
  min-height: 0;
  overflow: hidden;
}
.options .thumb {
  top: 1px;
  height: 120px;
}
.option {
  display: flex;
  align-items: center;
  height: 39px;
  padding: 0 29px 1px 6px;
  border-top: 1px solid var(--line);
}
.option .chev {
  margin: 0 10px 4px 3px;
}
.option label {
  display: flex;
  align-items: center;
  gap: 5px;
  margin-left: auto;
}
.option input {
  width: 32px;
  height: 12px;
  margin: 0;
  appearance: none;
  background: linear-gradient(#555, #555) center / 100% 2px no-repeat;
}
.option input:before {
  content: "";
  display: block;
  width: 12px;
  height: 12px;
  border: 2px solid #555;
  border-radius: 50%;
  background: var(--panel);
}
.option input:checked:before {
  margin-left: auto;
  background: #555;
}
.fields {
  width: 35px;
  flex: none;
  display: flex;
  flex-direction: column;
  align-items: center;
}
.fields button {
  height: 54px;
}
.fields h2 {
  margin-top: 14px;
  writing-mode: vertical-rl;
  font-weight: 600;
}

.status {
  height: 25px;
  flex: none;
  padding-left: 5px;
  border-top: 1px solid var(--line);
  line-height: 24px;
}

/* taskbar */
.taskbar {
  height: 33px;
  flex: none;
  display: flex;
  justify-content: space-between;
  background: #1e1e1e;
  color: #fff;
}
.taskbar svg {
  width: 18px;
  height: 18px;
  stroke: none;
}
.taskbar .wl {
  stroke: #fff;
}
.apps {
  display: flex;
}
.apps button {
  width: 31px;
  margin: 0 5px;
  border: solid #5b8ed8;
  border-width: 0 0 3px;
  padding-top: 3px;
}
.apps .sys {
  width: 39px;
  margin: 0;
  border-color: transparent;
}
.apps .sys + button:not(.sys) {
  margin-left: 7px;
}
.apps .stack {
  border-image: linear-gradient(90deg, #5b8ed8 70%, #456a9c 70%) 3;
}
.apps .current {
  width: 41px;
  margin: 0;
  background: #4b4b4b;
}
.tray {
  display: flex;
  align-items: center;
  gap: 10px;
  padding-right: 28px;
}
.tray svg {
  width: 16px;
  height: 16px;
}
.lang {
  margin-left: 9px;
}
.clock {
  margin: 0 13px 0 8px;
}
.tray button svg {
  width: 18px;
  height: 18px;
}
```
